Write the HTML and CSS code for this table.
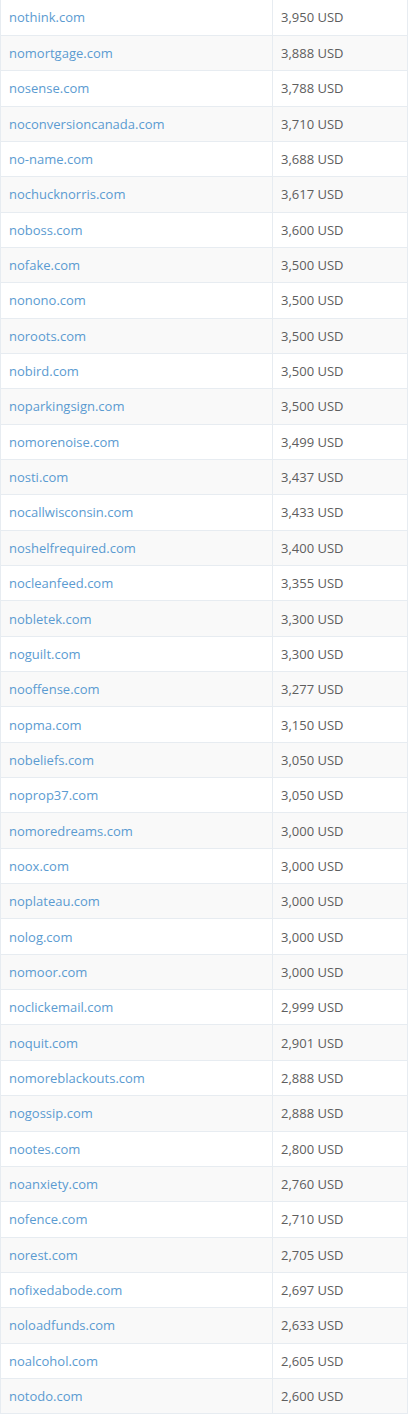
FILE: index.html
```html
<!DOCTYPE html>
<html>
<head>
<meta charset="utf-8">
<link rel="stylesheet" href="styles.css">
</head>
<body>
<table class="domains">
<tbody>
<tr><td class="name"><a href="#">nothink.com</a></td><td class="price">3,950 USD</td></tr>
<tr><td class="name"><a href="#">nomortgage.com</a></td><td class="price">3,888 USD</td></tr>
<tr><td class="name"><a href="#">nosense.com</a></td><td class="price">3,788 USD</td></tr>
<tr><td class="name"><a href="#">noconversioncanada.com</a></td><td class="price">3,710 USD</td></tr>
<tr><td class="name"><a href="#">no-name.com</a></td><td class="price">3,688 USD</td></tr>
<tr><td class="name"><a href="#">nochucknorris.com</a></td><td class="price">3,617 USD</td></tr>
<tr><td class="name"><a href="#">noboss.com</a></td><td class="price">3,600 USD</td></tr>
<tr><td class="name"><a href="#">nofake.com</a></td><td class="price">3,500 USD</td></tr>
<tr><td class="name"><a href="#">nonono.com</a></td><td class="price">3,500 USD</td></tr>
<tr><td class="name"><a href="#">noroots.com</a></td><td class="price">3,500 USD</td></tr>
<tr><td class="name"><a href="#">nobird.com</a></td><td class="price">3,500 USD</td></tr>
<tr><td class="name"><a href="#">noparkingsign.com</a></td><td class="price">3,500 USD</td></tr>
<tr><td class="name"><a href="#">nomorenoise.com</a></td><td class="price">3,499 USD</td></tr>
<tr><td class="name"><a href="#">nosti.com</a></td><td class="price">3,437 USD</td></tr>
<tr><td class="name"><a href="#">nocallwisconsin.com</a></td><td class="price">3,433 USD</td></tr>
<tr><td class="name"><a href="#">noshelfrequired.com</a></td><td class="price">3,400 USD</td></tr>
<tr><td class="name"><a href="#">nocleanfeed.com</a></td><td class="price">3,355 USD</td></tr>
<tr><td class="name"><a href="#">nobletek.com</a></td><td class="price">3,300 USD</td></tr>
<tr><td class="name"><a href="#">noguilt.com</a></td><td class="price">3,300 USD</td></tr>
<tr><td class="name"><a href="#">nooffense.com</a></td><td class="price">3,277 USD</td></tr>
<tr><td class="name"><a href="#">nopma.com</a></td><td class="price">3,150 USD</td></tr>
<tr><td class="name"><a href="#">nobeliefs.com</a></td><td class="price">3,050 USD</td></tr>
<tr><td class="name"><a href="#">noprop37.com</a></td><td class="price">3,050 USD</td></tr>
<tr><td class="name"><a href="#">nomoredreams.com</a></td><td class="price">3,000 USD</td></tr>
<tr><td class="name"><a href="#">noox.com</a></td><td class="price">3,000 USD</td></tr>
<tr><td class="name"><a href="#">noplateau.com</a></td><td class="price">3,000 USD</td></tr>
<tr><td class="name"><a href="#">nolog.com</a></td><td class="price">3,000 USD</td></tr>
<tr><td class="name"><a href="#">nomoor.com</a></td><td class="price">3,000 USD</td></tr>
<tr><td class="name"><a href="#">noclickemail.com</a></td><td class="price">2,999 USD</td></tr>
<tr><td class="name"><a href="#">noquit.com</a></td><td class="price">2,901 USD</td></tr>
<tr><td class="name"><a href="#">nomoreblackouts.com</a></td><td class="price">2,888 USD</td></tr>
<tr><td class="name"><a href="#">nogossip.com</a></td><td class="price">2,888 USD</td></tr>
<tr><td class="name"><a href="#">nootes.com</a></td><td class="price">2,800 USD</td></tr>
<tr><td class="name"><a href="#">noanxiety.com</a></td><td class="price">2,760 USD</td></tr>
<tr><td class="name"><a href="#">nofence.com</a></td><td class="price">2,710 USD</td></tr>
<tr><td class="name"><a href="#">norest.com</a></td><td class="price">2,705 USD</td></tr>
<tr><td class="name"><a href="#">nofixedabode.com</a></td><td class="price">2,697 USD</td></tr>
<tr><td class="name"><a href="#">noloadfunds.com</a></td><td class="price">2,633 USD</td></tr>
<tr><td class="name"><a href="#">noalcohol.com</a></td><td class="price">2,605 USD</td></tr>
<tr><td class="name"><a href="#">notodo.com</a></td><td class="price">2,600 USD</td></tr>
</tbody>
</table>
</body>
</html>
```
FILE: styles.css
```css
html, body {
  margin: 0;
  padding: 0;
  background: #fff;
}
body {
  font-family: "Open Sans", "Liberation Sans", sans-serif;
  font-size: 13px;
  color: #5e5e5e;
}
.domains {
  width: 408px;
  border-collapse: collapse;
  border-left: 1px solid #e7ecf1;
  border-right: 1px solid #e7ecf1;
}
.domains td {
  border-bottom: 1px solid #e7ecf1;
  height: 35.35px;
  box-sizing: border-box;
  padding: 0 8px;
  line-height: 18px;
  vertical-align: middle;
}
.domains tr:nth-child(even) td {
  background: #f9f9f9;
}
.domains td.name {
  width: 272px;
  border-right: 1px solid #e7ecf1;
}
.domains a {
  color: #5b9bd1;
  text-decoration: none;
}
```
